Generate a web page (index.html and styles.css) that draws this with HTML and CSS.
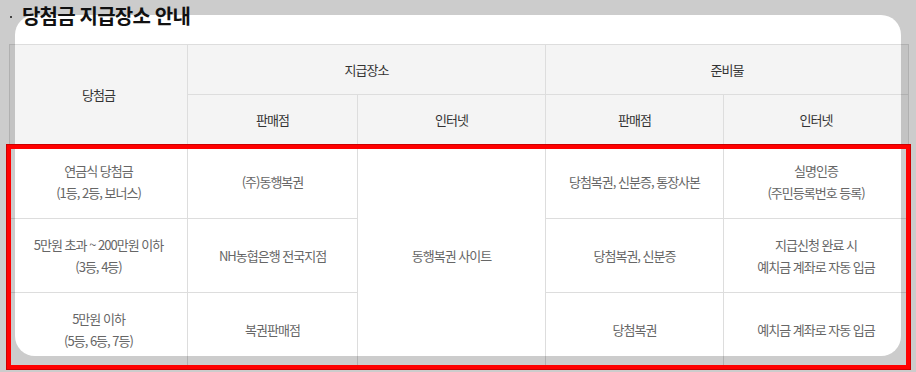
FILE: index.html
```html
<!DOCTYPE html>
<html lang="ko">
<head>
    <meta charset="UTF-8">
    <title>당첨금 지급장소 안내</title>
    <link rel="stylesheet" href="styles.css">
</head>
<body>
    <h2 class="title"><span class="dot"></span>당첨금 지급장소 안내</h2>

    <table class="pay-table">
        <colgroup>
            <col class="c1">
            <col class="c2">
            <col class="c3">
            <col class="c4">
            <col class="c5">
        </colgroup>
        <thead>
            <tr class="head-top">
                <th rowspan="2">당첨금</th>
                <th colspan="2">지급장소</th>
                <th colspan="2">준비물</th>
            </tr>
            <tr class="head-sub">
                <th>판매점</th>
                <th>인터넷</th>
                <th>판매점</th>
                <th>인터넷</th>
            </tr>
        </thead>
        <tbody>
            <tr>
                <td>연금식 당첨금<br>(1등, 2등, 보너스)</td>
                <td>(주)동행복권</td>
                <td rowspan="3">동행복권 사이트</td>
                <td>당첨복권, 신분증, 통장사본</td>
                <td>실명인증<br>(주민등록번호 등록)</td>
            </tr>
            <tr>
                <td>5만원 초과 ~ 200만원 이하<br>(3등, 4등)</td>
                <td>NH농협은행 전국지점</td>
                <td>당첨복권, 신분증</td>
                <td>지급신청 완료 시<br>예치금 계좌로 자동 입금</td>
            </tr>
            <tr>
                <td>5만원 이하<br>(5등, 6등, 7등)</td>
                <td>복권판매점</td>
                <td>당첨복권</td>
                <td>예치금 계좌로 자동 입금</td>
            </tr>
        </tbody>
    </table>

    <!-- 강조 영역: 바깥은 어둡게, 본문 행은 빨간 테두리 -->
    <div class="spot"></div>
    <div class="mark"></div>
</body>
</html>
```

FILE: styles.css
```css
body {
    margin: 0;
    background: #fff;
    font-family: "Noto Sans CJK KR", "Noto Sans", sans-serif;
    overflow: hidden;
}
.title {
    position: relative;
    z-index: 3;
    height: 44px;
    margin: 0;
    padding: 2px 0 0 10px;
    box-sizing: border-box;
    font-size: 20px;
    font-weight: bold;
    letter-spacing: -0.8px;
    color: #111;
    line-height: 28px;
}
.dot {
    display: inline-block;
    width: 2px;
    height: 2px;
    background: #444;
    margin-right: 10px;
    vertical-align: 6px;
}
.pay-table {
    width: 899px;
    margin-left: 9px;
    border-collapse: collapse;
    table-layout: fixed;
    border-top: 1px solid #333;
}
.c1 { width: 178px; }
.c2 { width: 170px; }
.c3 { width: 188px; }
.c4 { width: 178px; }
.c5 { width: 185px; }
th, td {
    border: 1px solid #ddd;
    text-align: center;
    padding: 0;
    letter-spacing: -1px;
}
th {
    background: #f4f4f4;
    color: #333;
    font-size: 13px;
    font-weight: normal;
}
.head-top th {
    height: 49px;
}
.head-sub th {
    height: 49px;
}
td {
    height: 73px;
    color: #666;
    font-size: 13px;
    line-height: 22px;
}
.spot {
    position: absolute;
    z-index: 2;
    left: 15px;
    top: 15px;
    width: 886px;
    height: 341px;
    border-radius: 20px;
    box-shadow: 0 0 0 2000px rgba(0, 0, 0, 0.2);
    pointer-events: none;
}
.mark {
    position: absolute;
    z-index: 4;
    left: 7px;
    top: 145px;
    width: 895px;
    height: 216px;
    border: 4px solid #f00;
    box-shadow: 0 0 0 1px #c00;
}
```
